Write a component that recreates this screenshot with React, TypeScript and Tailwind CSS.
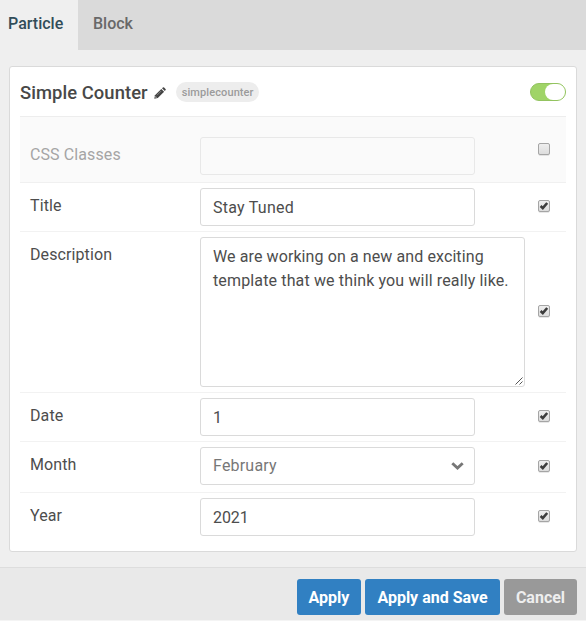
import type { ReactNode } from 'react';

function CheckBox({ checked, className }: { checked: boolean; className: string }) {
  return (
    <div className={`ml-auto mr-4 h-3 w-3 shrink-0 ${className}`}>
      <svg
        role="checkbox"
        aria-checked={checked}
        width="12"
        height="13"
        viewBox="0 0 12 13"
        className="block overflow-visible"
      >
        <defs>
          <linearGradient id="box" x1="0" y1="0" x2="0" y2="1">
            <stop offset="0" stopColor="#efefef" />
            <stop offset="1" stopColor="#dcdcdc" />
          </linearGradient>
        </defs>
        <rect x="0.5" y="1.5" width="11" height="11" rx="1.5" fill="none" stroke="#000" strokeOpacity="0.09" />
        <rect x="0.5" y="0.5" width="11" height="11" rx="1.5" fill="url(#box)" stroke="#a5a5a5" />
        {checked && <path d="M2.6 6 L4.8 8.1 L9.2 3" fill="none" stroke="#3c3c3c" strokeWidth="2.6" />}
      </svg>
    </div>
  );
}

type RowProps = {
  label: string;
  height: string;
  labelClass: string;
  fieldClass: string;
  boxClass: string;
  checked?: boolean;
  children: ReactNode;
};

function Row({ label, height, labelClass, fieldClass, boxClass, checked = true, children }: RowProps) {
  return (
    <div className={`flex items-start pl-2.5 ${height}`}>
      <div className={`w-[170px] shrink-0 leading-6 tracking-[0.1px] ${labelClass}`}>{label}</div>
      <div className={`shrink-0 ${fieldClass}`}>{children}</div>
      <CheckBox checked={checked} className={boxClass} />
    </div>
  );
}

const field = 'flex h-[38px] w-[275px] items-center rounded-[3px] border px-3';

export default function App() {
  return (
    <div className="flex h-[621px] w-[586px] flex-col overflow-hidden bg-[#efefef] font-['Roboto',sans-serif] text-base text-[#4d4d4d]">
      <nav className="flex h-[50px] shrink-0 bg-[#dadada] font-medium leading-6">
        <div className="w-[78px] bg-[#efefef] pl-2 pt-3 text-[#314d59]">Particle</div>
        <div className="pl-[15px] pt-3 text-[#686868]">Block</div>
      </nav>

      <main className="mx-[9px] mt-4 h-[486px] shrink-0 rounded-[3px] border border-[#dadada] bg-white px-2.5">
        <header className="flex h-[50px] items-center border-b border-[#ededed] text-[#484848]">
          <h1 className="pt-0.5 text-[18.4px] font-medium leading-6 tracking-[0.07px]">Simple Counter</h1>
          <svg width="12" height="12" viewBox="0 0 12 12" className="ml-1.5 mt-0.5" fill="#434343">
            <path d="M.3 11.7 1 8.2 7.3 1.9 10.1 4.7 3.8 11Z" />
            <path d="M8 1.2 8.9.4Q9.5-.1 10.1.5L11.5 1.9Q12.1 2.5 11.6 3.1L10.8 4Z" />
            <path d="M1.5 9.1 2.9 10.5 1.5 10.8Z" fill="#ddd" />
            <path d="M3 8.2 7.2 4" stroke="#aaa" strokeWidth=".6" />
          </svg>
          <span className="ml-2.5 flex h-5 w-[83px] items-center justify-center rounded-full bg-[#ededed] pl-px pt-[3px] text-[11px] font-medium tracking-[0.1px] text-[#9b9b9b]">
            simplecounter
          </span>
          <div className="ml-auto flex h-[18px] w-9 items-center justify-end rounded-full border border-[#93c360] bg-[#a0d468]">
            <div className="h-4 w-5 rounded-full bg-white" />
          </div>
        </header>

        <Row label="CSS Classes" height="h-[66px] border-b border-[#f0f0f0] bg-[#fafafa]" labelClass="pt-[26px] text-[#a5a5a5]" fieldClass="pt-5" boxClass="mt-[26px]" checked={false}>
          <div className={`${field} border-[#e8e8e8]`} />
        </Row>
        <Row label="Title" height="h-[49px] border-b border-[#f2f2f2]" labelClass="pt-[11px]" fieldClass="pt-[5px]" boxClass="mt-[17px]">
          <div className={`${field} border-[#dadada] pt-0.5 tracking-[0.25px]`}>Stay Tuned</div>
        </Row>
        <Row label="Description" height="h-[161px] border-b border-[#f2f2f2]" labelClass="pt-[11px]" fieldClass="pt-[5px]" boxClass="mt-[73px]">
          <div className="relative h-[150px] w-[325px] rounded-[3px] border border-[#dadada] px-3 pt-[7px] leading-6">
            <p className="whitespace-nowrap tracking-[0.1px]">We are working on a new and exciting</p>
            <p className="whitespace-nowrap tracking-[0.14px]">template that we think you will really like.</p>
            <svg width="8" height="8" viewBox="0 0 8 8" className="absolute bottom-px right-px" stroke="#555" strokeWidth="1">
              <path d="M.5 7.5 7.5.5M4.5 7.5 7.5 4.5" />
            </svg>
          </div>
        </Row>
        <Row label="Date" height="h-[49px] border-b border-[#f2f2f2]" labelClass="pt-[11px]" fieldClass="pt-[5px]" boxClass="mt-[17px]">
          <div className={`${field} border-[#dadada] pt-0.5`}>1</div>
        </Row>
        <Row label="Month" height="h-[51px] border-b border-[#f2f2f2]" labelClass="pt-[11px]" fieldClass="pt-[5px]" boxClass="mt-[18px]">
          <div className={`${field} justify-between border-[#dadada] pr-2.5 text-[#777]`}>
            <span className="tracking-[0.2px]">February</span>
            <svg width="13" height="8" viewBox="0 0 13 8" fill="none" stroke="#777" strokeWidth="2.9" className="mb-px">
              <path d="M1.3 1.2 6.5 6 11.7 1.2" />
            </svg>
          </div>
        </Row>
        <Row label="Year" height="h-[58px]" labelClass="pt-[11px]" fieldClass="pt-[5px]" boxClass="mt-[17px]">
          <div className={`${field} border-[#dadada] pt-0.5 tracking-[-0.1px]`}>2021</div>
        </Row>
      </main>

      <footer className="mt-[15px] flex h-[54px] shrink-0 justify-end gap-1 border-b border-t border-b-[#f4f4f4] border-t-[#dddddd] bg-[#e9e9e9] pr-[9px] pt-[11px] font-bold text-white">
        <button className="h-9 w-16 rounded-[3px] bg-[#3180c2] pt-0.5">Apply</button>
        <button className="h-9 w-[135px] rounded-[3px] bg-[#3180c2] pt-0.5">Apply and Save</button>
        <button className="h-9 w-[73px] rounded-[3px] bg-[#999999] pt-0.5 text-[#eeeeee]">Cancel</button>
      </footer>
    </div>
  );
}
